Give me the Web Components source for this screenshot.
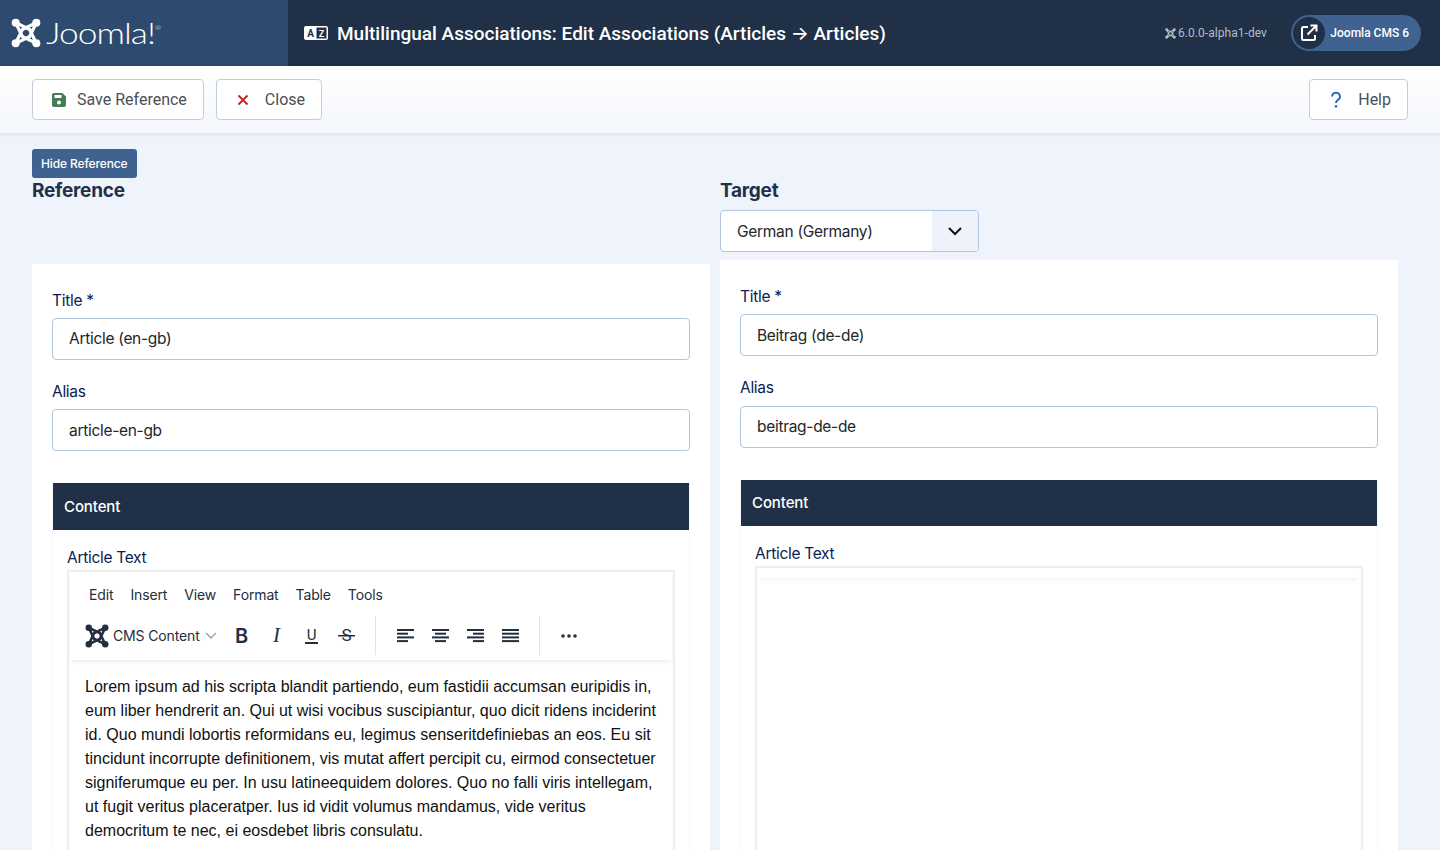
<!DOCTYPE html>
<html lang="en">
<head>
<meta charset="utf-8">
<title>Multilingual Associations: Edit Associations</title>
<style>
  html, body { margin: 0; height: 100%; overflow: hidden; background: #eff4fc; font-family: Inter, "Liberation Sans", sans-serif; }
  j-workspace { height: 850px; }
</style>
</head>
<body>
<j-workspace>
  <j-header slot="header" title-text="Multilingual Associations: Edit Associations (Articles → Articles)"></j-header>
  <j-toolbar slot="toolbar">
    <j-button icon="save">Save Reference</j-button>
    <j-button icon="close">Close</j-button>
    <j-button slot="end" icon="help">Help</j-button>
  </j-toolbar>
  <j-toggle slot="toggle">Hide Reference</j-toggle>
  <j-pane slot="left" heading="Reference" head-height="85.6">
    <j-field label="Title *" value="Article (en-gb)"></j-field>
    <j-field label="Alias" value="article-en-gb"></j-field>
    <j-tab label="Content">
      <j-editor label="Article Text" loaded>
        Lorem ipsum ad his scripta blandit partiendo, eum fastidii accumsan euripidis in, eum liber hendrerit an. Qui ut wisi vocibus suscipiantur, quo dicit ridens inciderint id. Quo mundi lobortis reformidans eu, legimus senseritdefiniebas an eos. Eu sit tincidunt incorrupte definitionem, vis mutat affert percipit cu, eirmod consectetuer signiferumque eu per. In usu latineequidem dolores. Quo no falli viris intellegam, ut fugit veritus placeratper. Ius id vidit volumus mandamus, vide veritus democritum te nec, ei eosdebet libris consulatu.
      </j-editor>
    </j-tab>
  </j-pane>
  <j-pane slot="right" heading="Target" head-height="82">
    <j-lang-select slot="head" value="German (Germany)"></j-lang-select>
    <j-field label="Title *" value="Beitrag (de-de)"></j-field>
    <j-field label="Alias" value="beitrag-de-de"></j-field>
    <j-tab label="Content">
      <j-editor label="Article Text"></j-editor>
    </j-tab>
  </j-pane>
</j-workspace>

<script>
/** Joomla knot: a corner ball with two arms running past the middle, turned four times. */
class JMark extends HTMLElement {
  connectedCallback() {
    const size = this.getAttribute('size') || '32';
    const hook = '<g><circle cx="5" cy="5" r="4.300"/><path d="M5 5 L20.500 12.500 M5 5 L12.500 20.500" fill="none" stroke="currentColor" stroke-width="3.400"/></g>';
    const turns = [0, 90, 180, 270].map((a) => hook.replace('<g>', `<g transform="rotate(${a} 16 16)">`)).join('');
    this.attachShadow({ mode: 'open' }).innerHTML = `
      <style>:host { display: inline-flex; flex: 0 0 auto; } svg { display: block; }</style>
      <svg width="${size}" height="${size}" viewBox="0 0 32 32" fill="currentColor" aria-hidden="true">${turns}</svg>`;
  }
}

class JHeader extends HTMLElement {
  connectedCallback() {
    this.attachShadow({ mode: 'open' }).innerHTML = `
      <style>
        :host { display: flex; align-items: center; height: 66px; background: #1f3047; color: #fff; font-family: Roboto, Inter, "Liberation Sans", sans-serif; }
        .brand { box-sizing: border-box; width: 288px; height: 100%; padding-left: 11px; display: flex; align-items: center; gap: 5px; background: #2e4a6e; }
        .word { font: 300 29px/1 Lato, sans-serif; letter-spacing: -.8px; transform: scaleX(1.22); transform-origin: left center; position: relative; top: -1px; }
        .word sup { font-size: 6px; position: relative; top: -14px; vertical-align: baseline; letter-spacing: 0; }
        .lang { margin-left: 16px; display: block; }
        h1 { margin: 0 0 0 9px; font-size: 19px; line-height: 1; font-weight: 500; white-space: nowrap; }
        .version { margin-left: auto; display: flex; align-items: center; gap: 2px; font-size: 12px; color: #b4bcc8; letter-spacing: .05px; }
        .pill { margin: 0 19px 0 24px; width: 130px; height: 36px; box-sizing: border-box; padding: 2px 12px 2px 2px; border-radius: 18px; background: #3f6291; display: flex; align-items: center; justify-content: space-between; font-size: 12px; font-weight: 500; }
        .disc { width: 32px; height: 32px; border-radius: 50%; background: #1f3047; display: flex; align-items: center; justify-content: center; }
      </style>
      <div class="brand"><j-mark size="30"></j-mark><span class="word">Joomla!<sup>®</sup></span></div>
      <svg class="lang" width="24" height="16" viewBox="0 0 24 16" aria-hidden="true">
        <path fill="#fff" d="M2 1h20a2 2 0 0 1 2 2v10a2 2 0 0 1-2 2H2a2 2 0 0 1-2-2V3a2 2 0 0 1 2-2z"/>
        <rect x="12.5" y="2.5" width="10" height="11" fill="#1f3047"/>
        <text x="6.5" y="12" text-anchor="middle" font-family="Roboto, sans-serif" font-weight="700" font-size="10" fill="#1f3047">A</text>
        <text x="17.5" y="12" text-anchor="middle" font-family="Roboto, sans-serif" font-weight="700" font-size="9" fill="#fff">Z</text>
      </svg>
      <h1>${this.getAttribute('title-text')}</h1>
      <div class="version"><j-mark size="11"></j-mark><span>6.0.0-alpha1-dev</span></div>
      <div class="pill">
        <span class="disc"><svg width="18" height="18" viewBox="0 0 18 18" fill="none" stroke="#fff" stroke-width="2" aria-hidden="true"><path d="M8 3H3.5A1.5 1.5 0 0 0 2 4.500v10A1.500 1.500 0 0 0 3.500 16h10a1.500 1.500 0 0 0 1.500-1.500V11"/><path d="M7.500 10.500 16 2M10.500 1.500H16.500V7.500"/></svg></span>
        <span>Joomla CMS 6</span>
      </div>`;
  }
}

class JToolbar extends HTMLElement {
  constructor() {
    super();
    this.attachShadow({ mode: 'open' }).innerHTML = `
      <style>
        :host { display: flex; align-items: center; gap: 12px; box-sizing: border-box; height: 67px; padding: 0 32px; background: linear-gradient(#fff, #f4f7fc); box-shadow: 0 1px 4px rgba(31,48,71,.12); position: relative; }
        .end { margin-left: auto; display: flex; }
      </style>
      <slot></slot><div class="end"><slot name="end"></slot></div>`;
  }
}

const BUTTON_ICONS = {
  save: '<svg width="14" height="14" viewBox="0 0 14 14"><path fill="#457d54" fill-rule="evenodd" d="M2 0h8.200L14 3.600V12a2 2 0 0 1-2 2H2a2 2 0 0 1-2-2V2a2 2 0 0 1 2-2zM2.500 2v3h7V2zM7 7.500a2 2 0 1 0 0 4 2 2 0 0 0 0-4z"/></svg>',
  close: '<svg width="12" height="12" viewBox="0 0 12 12"><path stroke="#c52827" stroke-width="2" d="M1.500 1.500l9 9M10.500 1.500l-9 9"/></svg>',
  help: '<svg width="12" height="18" viewBox="0 0 12 18"><path fill="none" stroke="#2a69b8" stroke-width="2" d="M2 5.500a4 3.800 0 1 1 6 3.300c-1.300.8-2 1.500-2 3.200"/><circle cx="6" cy="15.300" r="1.300" fill="#2a69b8"/></svg>',
};

class JButton extends HTMLElement {
  connectedCallback() {
    const icon = this.getAttribute('icon');
    this.attachShadow({ mode: 'open' }).innerHTML = `
      <style>
        :host { display: inline-flex; align-items: center; box-sizing: border-box; height: 41px; padding: 0 16px 0 19px; background: #fff; border: 1px solid #c4cdda; border-radius: 4px; color: #495057; font: 400 16px Roboto, "Liberation Sans", sans-serif; }
        .icon { display: flex; justify-content: center; width: 14px; margin-right: 11px; }
        :host([icon="close"]) .icon, :host([icon="help"]) .icon { width: 14px; margin-right: 15px; }
        :host([icon="help"]) { padding-left: 19px; }
      </style>
      <span class="icon">${BUTTON_ICONS[icon]}</span><slot></slot>`;
  }
}

class JToggle extends HTMLElement {
  constructor() {
    super();
    this.attachShadow({ mode: 'open' }).innerHTML = `
      <style>
        :host { display: inline-flex; align-items: center; height: 29px; padding: 0 9px; background: #3f6291; border-radius: 3px; color: #fff; font: 500 12px Inter, sans-serif; letter-spacing: -.12px; }
      </style>
      <slot></slot>`;
  }
}

class JPane extends HTMLElement {
  connectedCallback() {
    this.attachShadow({ mode: 'open' }).innerHTML = `
      <style>
        :host { display: block; }
        .head { height: ${this.getAttribute('head-height')}px; box-sizing: border-box; }
        h2 { margin: 0; font: 700 19px/26px Inter, sans-serif; color: #1f3047; letter-spacing: -.25px; }
        .sheet { background: #fff; padding: 25px 20px 0; height: 700px; }
      </style>
      <div class="head"><h2>${this.getAttribute('heading')}</h2><slot name="head"></slot></div>
      <div class="sheet"><slot></slot></div>`;
  }
}

class JLangSelect extends HTMLElement {
  connectedCallback() {
    this.attachShadow({ mode: 'open' }).innerHTML = `
      <style>
        :host { display: flex; box-sizing: border-box; width: 259px; height: 42px; margin-top: 6px; background: #fff; border: 1px solid #b2c5de; border-radius: 4px; overflow: hidden; font: 400 15.500px Inter, sans-serif; letter-spacing: -.3px; color: #22262a; }
        .value { flex: 1; display: flex; align-items: center; padding-left: 16px; }
        .arrow { width: 46px; background: #eef3fb; display: flex; align-items: center; justify-content: center; }
      </style>
      <div class="value">${this.getAttribute('value')}</div>
      <div class="arrow"><svg width="16" height="10" viewBox="0 0 16 10" fill="none" stroke="#111" stroke-width="2"><path d="M2 2l6 6 6-6"/></svg></div>`;
  }
}

class JField extends HTMLElement {
  connectedCallback() {
    this.attachShadow({ mode: 'open' }).innerHTML = `
      <style>
        :host { display: block; margin-bottom: 20px; font: 400 15.500px Inter, sans-serif; letter-spacing: -.3px; }
        label { display: block; height: 29.400px; line-height: 24px; color: #0a2050; }
        .input { box-sizing: border-box; height: 42px; padding: 0 16px .5px; display: flex; align-items: center; background: #fff; border: 1px solid #b2c5de; border-radius: 4px; color: #22262a; }
      </style>
      <label>${this.getAttribute('label')}</label>
      <div class="input">${this.getAttribute('value')}</div>`;
  }
}

class JTab extends HTMLElement {
  connectedCallback() {
    this.attachShadow({ mode: 'open' }).innerHTML = `
      <style>
        :host { display: block; margin-top: 32px; border: 1px solid #f6f7f9; border-top: 0; margin-left: 0; }
        .bar { height: 46.600px; margin-right: 0; display: flex; align-items: center; padding: 0 0 1px 11px; box-sizing: border-box; background: #1f3047; color: #fff; font: 500 15px Inter, sans-serif; letter-spacing: -.1px; }
        .body { padding: 15px 14px 0; height: 500px; }
      </style>
      <div class="bar">${this.getAttribute('label')}</div>
      <div class="body"><slot></slot></div>`;
  }
}

const ICON_COLOR = '#222f3e';

/** Paints a row of toolbar glyphs drawn as plain lines. */
const lines = (rows) => `<svg width="18" height="14" viewBox="0 0 18 14" fill="${ICON_COLOR}">${rows.map((r, i) => `<rect x="${r[0]}" y="${i * 3.700}" width="${r[1]}" height="2"/>`).join('')}</svg>`;

const FORMAT_BUTTONS = `
  <span class="b" style="font:600 20px Inter,sans-serif">B</span>
  <span class="b" style="font:italic 400 21px 'Liberation Serif',serif">I</span>
  <span class="b"><span style="font:400 15px/14px Roboto,sans-serif;border-bottom:2px solid ${ICON_COLOR};padding:0 2px">U</span></span>
  <span class="b"><span class="strike">S</span></span>`;

const ALIGN_BUTTONS = [
  [[0, 17], [0, 11], [0, 17], [0, 11]],
  [[0, 17], [3, 11], [0, 17], [3, 11]],
  [[0, 17], [6, 11], [0, 17], [6, 11]],
  [[0, 17], [0, 17], [0, 17], [0, 17]],
].map((r) => `<span class="b">${lines(r)}</span>`).join('');

class JEditor extends HTMLElement {
  connectedCallback() {
    const loaded = this.hasAttribute('loaded');
    const header = loaded ? `
      <div class="tox-head">
        <div class="menu"><span>Edit</span><span>Insert</span><span>View</span><span>Format</span><span>Table</span><span>Tools</span></div>
        <div class="tools">
          <div class="blocks"><j-mark size="24"></j-mark><span class="blocks-label">CMS Content</span>
            <svg width="12" height="7" viewBox="0 0 12 7" fill="none" stroke="#9aa0a8" stroke-width="1.400"><path d="M1 1l5 5 5-5"/></svg></div>
          <div class="group first">${FORMAT_BUTTONS}</div>
          <div class="group second">${ALIGN_BUTTONS}</div>
          <div class="group last"><span class="b"><svg width="18" height="4" viewBox="0 0 18 4" fill="${ICON_COLOR}"><circle cx="3" cy="2" r="1.800"/><circle cx="9" cy="2" r="1.800"/><circle cx="15" cy="2" r="1.800"/></svg></span></div>
        </div>
      </div>
      <div class="text"><slot></slot></div>` : '<div class="tox-empty"></div>';
    this.attachShadow({ mode: 'open' }).innerHTML = `
      <style>
        :host { display: block; font: 400 15.500px Inter, sans-serif; letter-spacing: -.3px; }
        label { display: block; height: 25px; line-height: 26px; color: #0a2050; }
        .frame { box-sizing: border-box; height: 600px; border: 2px solid #eee; border-bottom: 0; background: #fff; }
        .tox-head { height: 88px; margin: 0 1px; box-shadow: 0 2px 4px -1px rgba(34,47,62,.12); color: ${ICON_COLOR}; font: 400 14px Inter, sans-serif; letter-spacing: -.14px; position: relative; }
        .tox-empty { height: 10px; margin: 0 3px; border-bottom: 1px solid #f4f4f4; box-shadow: 0 3px 5px -2px rgba(34,47,62,.05); }
        .menu { display: flex; height: 46px; padding-left: 11px; align-items: center; gap: 1px; }
        .menu span { padding: 0 8px; }
        .tools { display: flex; align-items: center; height: 36px; }
        .blocks { box-sizing: border-box; width: 154px; padding-left: 15px; display: flex; align-items: center; gap: 4px; }
        .blocks-label { margin-right: 1px; white-space: nowrap; }
        .group { display: flex; box-sizing: border-box; height: 39px; padding: 0 10.500px 0 12px; border-right: 1px solid #e3e3e3; }
        .group.first { padding-left: 0; }
        .group.second { padding-left: 13px; }
        .group.last { border-right: 0; padding-left: 11px; }
        .b { width: 35px; display: flex; align-items: center; justify-content: center; color: ${ICON_COLOR}; }
        .strike { font: 400 17px/17px Roboto, sans-serif; padding: 0 4px; background: linear-gradient(${ICON_COLOR}, ${ICON_COLOR}) center / 100% 1.500px no-repeat; }
        .text { padding: 15px 15px 0 16px; font: 400 16px/24px "Liberation Sans", Arial, sans-serif; letter-spacing: 0; color: #111; }
      </style>
      <label>${this.getAttribute('label')}</label>
      <div class="frame">${header}</div>`;
  }
}

class JWorkspace extends HTMLElement {
  constructor() {
    super();
    this.attachShadow({ mode: 'open' }).innerHTML = `
      <style>
        :host { display: block; overflow: hidden; }
        .toggle { padding: 16px 32px 0; height: 29px; }
        .columns { display: grid; grid-template-columns: 1fr 1fr; gap: 10px; margin: 0 42px 0 32px; }
      </style>
      <slot name="header"></slot>
      <slot name="toolbar"></slot>
      <div class="toggle"><slot name="toggle"></slot></div>
      <div class="columns"><slot name="left"></slot><slot name="right"></slot></div>`;
  }
}

customElements.define('j-mark', JMark);
customElements.define('j-header', JHeader);
customElements.define('j-toolbar', JToolbar);
customElements.define('j-button', JButton);
customElements.define('j-toggle', JToggle);
customElements.define('j-pane', JPane);
customElements.define('j-lang-select', JLangSelect);
customElements.define('j-field', JField);
customElements.define('j-tab', JTab);
customElements.define('j-editor', JEditor);
customElements.define('j-workspace', JWorkspace);
</script>
</body>
</html>
